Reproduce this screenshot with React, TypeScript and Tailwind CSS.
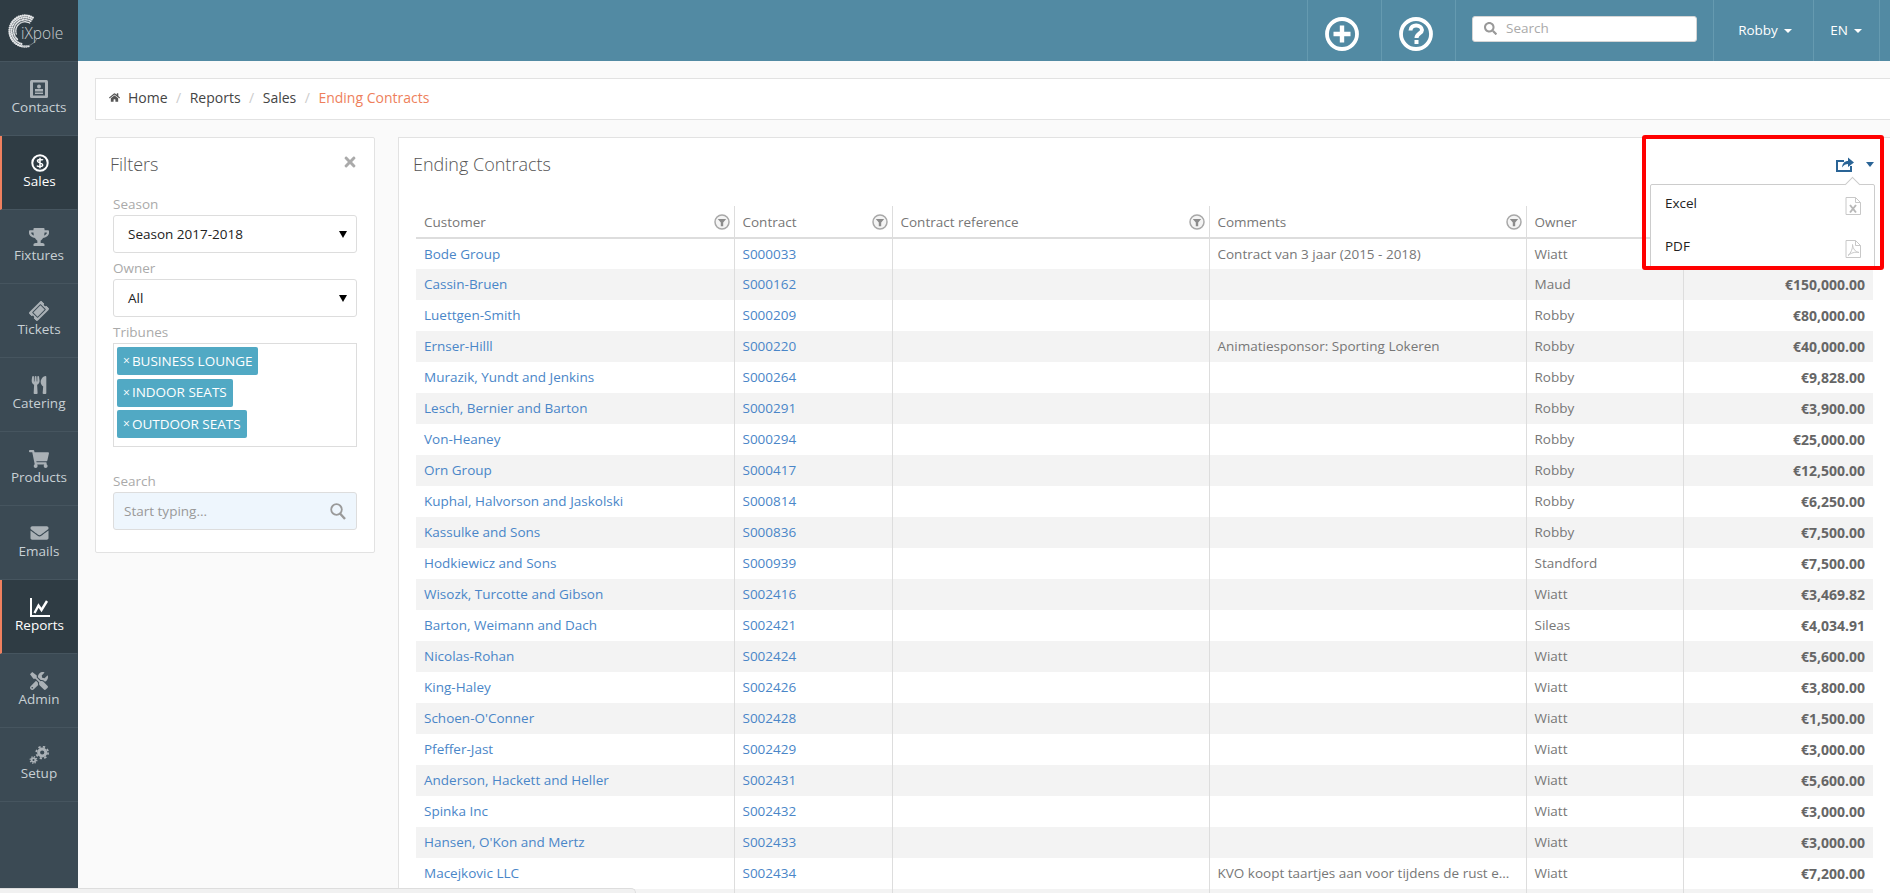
import type { ReactNode } from 'react';
import { FaTrophy, FaTicketAlt, FaUtensils, FaShoppingCart, FaEnvelope, FaTools, FaHome, FaTimes, FaSearch } from 'react-icons/fa';

interface Row {
  customer: string;
  contract: string;
  comments?: string;
  owner: string;
  amount: string;
}

const rows: Row[] = [
  { customer: 'Bode Group', contract: 'S000033', comments: 'Contract van 3 jaar (2015 - 2018)', owner: 'Wiatt', amount: '' },
  { customer: 'Cassin-Bruen', contract: 'S000162', owner: 'Maud', amount: '€150,000.00' },
  { customer: 'Luettgen-Smith', contract: 'S000209', owner: 'Robby', amount: '€80,000.00' },
  { customer: 'Ernser-Hilll', contract: 'S000220', comments: 'Animatiesponsor: Sporting Lokeren', owner: 'Robby', amount: '€40,000.00' },
  { customer: 'Murazik, Yundt and Jenkins', contract: 'S000264', owner: 'Robby', amount: '€9,828.00' },
  { customer: 'Lesch, Bernier and Barton', contract: 'S000291', owner: 'Robby', amount: '€3,900.00' },
  { customer: 'Von-Heaney', contract: 'S000294', owner: 'Robby', amount: '€25,000.00' },
  { customer: 'Orn Group', contract: 'S000417', owner: 'Robby', amount: '€12,500.00' },
  { customer: 'Kuphal, Halvorson and Jaskolski', contract: 'S000814', owner: 'Robby', amount: '€6,250.00' },
  { customer: 'Kassulke and Sons', contract: 'S000836', owner: 'Robby', amount: '€7,500.00' },
  { customer: 'Hodkiewicz and Sons', contract: 'S000939', owner: 'Standford', amount: '€7,500.00' },
  { customer: 'Wisozk, Turcotte and Gibson', contract: 'S002416', owner: 'Wiatt', amount: '€3,469.82' },
  { customer: 'Barton, Weimann and Dach', contract: 'S002421', owner: 'Sileas', amount: '€4,034.91' },
  { customer: 'Nicolas-Rohan', contract: 'S002424', owner: 'Wiatt', amount: '€5,600.00' },
  { customer: 'King-Haley', contract: 'S002426', owner: 'Wiatt', amount: '€3,800.00' },
  { customer: "Schoen-O'Conner", contract: 'S002428', owner: 'Wiatt', amount: '€1,500.00' },
  { customer: 'Pfeffer-Jast', contract: 'S002429', owner: 'Wiatt', amount: '€3,000.00' },
  { customer: 'Anderson, Hackett and Heller', contract: 'S002431', owner: 'Wiatt', amount: '€5,600.00' },
  { customer: 'Spinka Inc', contract: 'S002432', owner: 'Wiatt', amount: '€3,000.00' },
  { customer: "Hansen, O'Kon and Mertz", contract: 'S002433', owner: 'Wiatt', amount: '€3,000.00' },
  { customer: 'Macejkovic LLC', contract: 'S002434', comments: 'KVO koopt taartjes aan voor tijdens de rust e...', owner: 'Wiatt', amount: '€7,200.00' },
];

function ContactsIcon() {
  return (
    <svg viewBox="0 0 18 18" className="h-[18px] w-[18px]">
      <rect x="0" y="0" width="18" height="18" rx="1.5" fill="#aab1b6" />
      <rect x="3" y="2.5" width="12" height="13" fill="#3b4a54" />
      <circle cx="9" cy="6.5" r="2" fill="#aab1b6" />
      <rect x="5" y="9" width="8" height="2.5" fill="#aab1b6" />
      <rect x="5" y="12.5" width="8" height="1.5" fill="#aab1b6" />
    </svg>
  );
}

function SalesIcon() {
  return (
    <svg viewBox="0 0 18 18" className="h-[18px] w-[18px]">
      <circle cx="9" cy="9" r="7.7" fill="#2f3c44" stroke="#fff" strokeWidth="2" />
      <path d="M12 6.2 C11.4 5.2 6.6 4.8 6.4 6.9 C6.2 9 11.8 8.8 11.7 11 C11.5 13.2 6.6 12.8 6 11.7 M9 3.8 V14.2" fill="none" stroke="#fff" strokeWidth="1.5" />
    </svg>
  );
}

function ReportsIcon() {
  return (
    <svg viewBox="0 0 20 19" className="h-[19px] w-[20px]" fill="none" stroke="currentColor">
      <path d="M1 0 V18 H20" strokeWidth="2" />
      <path d="M4.5 15 L8.5 7.5 L11.5 12 L17 3" strokeWidth="2.4" />
    </svg>
  );
}

function SetupIcon() {
  return (
    <svg viewBox="0 0 20 18" className="h-[18px] w-[20px]" fill="none" stroke="currentColor">
      <circle cx="13.2" cy="6.5" r="3.6" strokeWidth="3" />
      <circle cx="13.2" cy="6.5" r="5.9" strokeWidth="1.8" strokeDasharray="2.3 2.33" />
      <circle cx="4.5" cy="14" r="1.9" strokeWidth="1.8" />
      <circle cx="4.5" cy="14" r="3.3" strokeWidth="1.3" strokeDasharray="1.3 1.29" />
    </svg>
  );
}

function Logo() {
  const dots: ReactNode[] = [];
  for (let ring = 0; ring < 4; ring++) {
    const r = 15.5 - ring * 2.1;
    const n = 30 - ring * 3;
    for (let i = 0; i < n; i++) {
      const a = (-60 - (i * (230 - ring * 28)) / n) * (Math.PI / 180);
      dots.push(<circle key={`${ring}-${i}`} cx={17 + r * Math.cos(a)} cy={17 + r * Math.sin(a)} r={1.2 - ring * 0.15} fill="#e4e6e8" />);
    }
  }
  return (
    <div className="relative h-[62px] border-b border-[#46555f] bg-[#2f3c44]">
      <svg viewBox="0 0 34 34" className="absolute left-[8px] top-[14px] h-[34px] w-[34px]">
        {dots}
        <path d="M29 25 A15.5 15.5 0 0 1 14 32" fill="none" stroke="#8f989e" strokeWidth="0.7" />
      </svg>
      <span className="absolute left-[21px] top-[22px] text-[15.5px] font-light leading-[22px] text-[#c9cdd0]">iXpole</span>
    </div>
  );
}

const navItems: { label: string; icon: ReactNode; active?: boolean }[] = [
  { label: 'Contacts', icon: <ContactsIcon /> },
  { label: 'Sales', icon: <SalesIcon />, active: true },
  { label: 'Fixtures', icon: <FaTrophy className="h-[18px] w-[20px]" /> },
  { label: 'Tickets', icon: <FaTicketAlt className="h-[18px] w-[18px] -rotate-45" /> },
  { label: 'Catering', icon: <FaUtensils className="h-[18px] w-[18px]" /> },
  { label: 'Products', icon: <FaShoppingCart className="h-[18px] w-[20px]" /> },
  { label: 'Emails', icon: <FaEnvelope className="h-[18px] w-[19px]" /> },
  { label: 'Reports', icon: <ReportsIcon />, active: true },
  { label: 'Admin', icon: <FaTools className="h-[18px] w-[20px]" /> },
  { label: 'Setup', icon: <SetupIcon /> },
];

function Sidebar() {
  return (
    <aside className="w-[78px] shrink-0 bg-[#3b4a54]">
      <Logo />
      {navItems.map((item) => (
        <div
          key={item.label}
          className={
            item.active
              ? 'flex h-[74px] flex-col items-center border-b border-l-2 border-r border-[#46555f] border-l-[#f0805f] border-r-[#35434c] bg-[#2f3c44] pt-[18px] text-white'
              : 'flex h-[74px] flex-col items-center border-b border-[#46555f] pt-[18px] text-[#c8d0d5]'
          }
        >
          <div className={item.active ? 'flex h-[18px] items-center text-white' : 'flex h-[18px] items-center text-[#aab1b6]'}>{item.icon}</div>
          <span className="text-[13.5px] leading-[18px]">{item.label}</span>
        </div>
      ))}
    </aside>
  );
}

function Caret({ className }: { className: string }) {
  return <span className={`inline-block h-0 w-0 border-x-[4px] border-t-[4px] border-x-transparent ${className}`} />;
}

function TopBar() {
  return (
    <header className="flex h-[61px] justify-end bg-[#528aa3]">
      <div className="flex w-[74px] justify-center border-l border-[#659ab0] pr-[5px] pt-[17px]">
        <svg viewBox="0 0 34 34" className="h-[34px] w-[34px]">
          <circle cx="17" cy="17" r="15" fill="none" stroke="#fff" strokeWidth="3.8" />
          <path d="M17 8.5 V25.5 M8.5 17 H25.5" stroke="#fff" strokeWidth="4.4" />
        </svg>
      </div>
      <div className="flex w-[74px] justify-center border-l border-[#659ab0] pr-[5px] pt-[17px]">
        <svg viewBox="0 0 34 34" className="h-[34px] w-[34px]">
          <circle cx="17" cy="17" r="15" fill="none" stroke="#fff" strokeWidth="3.8" />
          <path d="M11.5 13.5 C11.5 6.5 23 7.5 23 13 C23 16.5 17.5 16.5 17.5 21" fill="none" stroke="#fff" strokeWidth="4" />
          <rect x="15.5" y="23" width="4" height="4" fill="#fff" />
        </svg>
      </div>
      <div className="w-[258px] border-l border-[#659ab0] pl-[16px] pt-[16px]">
        <div className="flex h-[26px] w-[225px] items-center rounded-[3px] border border-[#d5d5d5] bg-white pb-[1px] pl-[11px] text-[13.5px] text-[#aaa]">
          <FaSearch className="mr-[9px] h-[13px] w-[13px] text-[#999]" />
          Search
        </div>
      </div>
      <div className="flex w-[100px] items-start justify-center border-l border-[#659ab0] pl-[3px] pt-[21px] text-[13.5px] leading-[18px] text-white">
        Robby
        <Caret className="ml-[6px] mt-[8px] border-t-white" />
      </div>
      <div className="flex w-[66px] items-start justify-center border-l border-[#659ab0] pr-[1px] pt-[21px] text-[13.5px] leading-[18px] text-white">
        EN
        <Caret className="ml-[6px] mt-[8px] border-t-white" />
      </div>
      <div className="w-[11px] border-l border-[#659ab0]" />
    </header>
  );
}

function Breadcrumb() {
  const sep = <span className="mx-[8.5px] text-[#ccc]">/</span>;
  return (
    <nav className="flex h-[42px] items-center border-y border-l border-[#e2e2e2] bg-white pb-[3px] pl-[13px] text-[14px] text-[#444]">
      <FaHome className="mr-[8px] h-[11px] w-[11px] text-[#555]" />
      <span>Home</span>
      {sep}
      <span>Reports</span>
      {sep}
      <span>Sales</span>
      {sep}
      <span className="text-[#ee7f5c]">Ending Contracts</span>
    </nav>
  );
}

function FieldLabel({ children, className }: { children: string; className: string }) {
  return <div className={`h-[18px] text-[13.5px] leading-[18px] text-[#aaa] ${className}`}>{children}</div>;
}

function SelectBox({ value }: { value: string }) {
  return (
    <div className="mt-[2px] flex h-[38px] items-center justify-between rounded-[3px] border border-[#ddd] bg-white pl-[14px] pr-[9px] text-[13.5px] text-[#222]">
      {value}
      <Caret className="border-x-[3.5px] border-t-[7px] border-t-black" />
    </div>
  );
}

function Tag({ label }: { label: string }) {
  return (
    <div className="flex h-[28px] items-center rounded-[2px] bg-[#51a9c4] pl-[6px] pr-[6px] text-[13.5px] text-white">
      <span className="mr-[2px] text-[12px]">×</span>
      {label}
    </div>
  );
}

function FiltersPanel() {
  return (
    <section className="h-[416px] w-[280px] shrink-0 rounded-[2px] border border-[#e2e2e2] bg-white pl-[17px] pr-[17px] pt-[14px]">
      <div className="-ml-[3px] flex h-[24px] items-center justify-between">
        <h2 className="text-[18px] font-light leading-[24px] text-[#555]">Filters</h2>
        <FaTimes className="mr-[-1px] -mt-[4px] h-[16px] w-[16px] text-[#aaa]" />
      </div>
      <FieldLabel className="mt-[19px]">Season</FieldLabel>
      <SelectBox value="Season 2017-2018" />
      <FieldLabel className="mt-[6px]">Owner</FieldLabel>
      <SelectBox value="All" />
      <FieldLabel className="mt-[6px]">Tribunes</FieldLabel>
      <div className="mt-[2px] flex h-[104px] flex-col items-start gap-[3.5px] border border-[#ddd] p-[3px]">
        <Tag label="BUSINESS LOUNGE" />
        <Tag label="INDOOR SEATS" />
        <Tag label="OUTDOOR SEATS" />
      </div>
      <FieldLabel className="mt-[25px]">Search</FieldLabel>
      <div className="mt-[2px] flex h-[38px] items-center justify-between rounded-[3px] border border-[#ddd] bg-[#eef6fd] pl-[10px] pr-[10px] text-[13.5px] text-[#999]">
        Start typing...
        <svg viewBox="0 0 16 17" className="h-[17px] w-[16px]">
          <circle cx="6.5" cy="6.5" r="5.3" fill="none" stroke="#9a9a9a" strokeWidth="1.8" />
          <path d="M10 10.5 L15 16" stroke="#9a9a9a" strokeWidth="2.4" />
        </svg>
      </div>
    </section>
  );
}

function FilterIcon() {
  return (
    <svg viewBox="0 0 16 16" className="h-[16px] w-[16px] shrink-0">
      <circle cx="8" cy="8" r="7" fill="#f4f4f4" stroke="#a8a8a8" strokeWidth="1.5" />
      <path d="M3.8 5 H12.2 L9.2 8.5 V12.2 H6.8 V8.5 Z" fill="#8c8c8c" />
    </svg>
  );
}

function HeaderCell({ label, filter, first }: { label: string; filter?: boolean; first?: boolean }) {
  return (
    <th className={first ? 'h-[32px] border-b-2 border-[#ddd] p-0 pt-[1px] font-normal' : 'h-[32px] border-b-2 border-l border-[#ddd] p-0 pt-[1px] font-normal'}>
      <div className="flex items-center justify-between pl-[8px] pr-[4px] text-[#777]">
        {label}
        {filter && <FilterIcon />}
      </div>
    </th>
  );
}

function ContractsTable() {
  const cell = 'h-[31px] border-l border-[#ddd] p-0 px-[8px]';
  return (
    <table className="w-[1457px] table-fixed border-collapse text-left text-[13.5px]">
      <colgroup>
        <col className="w-[318px]" />
        <col className="w-[158px]" />
        <col className="w-[317px]" />
        <col className="w-[317px]" />
        <col className="w-[157px]" />
        <col className="w-[190px]" />
      </colgroup>
      <thead>
        <tr>
          <HeaderCell label="Customer" filter first />
          <HeaderCell label="Contract" filter />
          <HeaderCell label="Contract reference" filter />
          <HeaderCell label="Comments" filter />
          <HeaderCell label="Owner" filter />
          <HeaderCell label="" />
        </tr>
      </thead>
      <tbody>
        {rows.map((row, i) => (
          <tr key={row.contract} className={i % 2 === 1 ? 'bg-[#f3f3f3]' : 'bg-white'}>
            <td className="h-[31px] p-0 px-[8px] text-[#4a86c8]">{row.customer}</td>
            <td className={`${cell} text-[#4a86c8]`}>{row.contract}</td>
            <td className={cell} />
            <td className={`${cell} truncate text-[#777]`}>{row.comments}</td>
            <td className={`${cell} text-[#777]`}>{row.owner}</td>
            <td className={`${cell} text-right text-[14px] font-bold text-[#666]`}>{row.amount}</td>
          </tr>
        ))}
        <tr className="bg-[#f3f3f3]">
          <td className="h-[31px] p-0" />
          <td className={cell} />
          <td className={cell} />
          <td className={cell} />
          <td className={cell} />
          <td className={cell} />
        </tr>
      </tbody>
    </table>
  );
}

function ExcelIcon() {
  return (
    <svg viewBox="0 0 16 18" className="h-[18px] w-[16px]" fill="none" stroke="#c8c8c8">
      <path d="M1 .5 H10.5 L15.5 5.5 V17.5 H1 Z M10.5 .5 V5.5 H15.5" />
      <path d="M5 8 L11 15.5 M11 8 L5 15.5" stroke="#b8b8b8" strokeWidth="2" />
    </svg>
  );
}

function PdfIcon() {
  return (
    <svg viewBox="0 0 16 18" className="h-[18px] w-[16px]" fill="none" stroke="#c8c8c8">
      <path d="M1 .5 H10.5 L15.5 5.5 V17.5 H1 Z M10.5 .5 V5.5 H15.5" />
      <path d="M3 15.5 C6 13 8 8 7.5 4.5 C8 9 10.5 12 14 12.5 C10 11.5 6 13 3 15.5 Z" />
    </svg>
  );
}

function ExportMenu() {
  return (
    <div className="absolute right-[6px] top-[-3px] h-[135px] w-[242px] overflow-hidden rounded-[3px] border-4 border-[#ff0000]">
      <div className="absolute left-[4px] top-[45px] h-[200px] w-[225px] rounded-[2px] border border-[#ccc] bg-white text-[13.5px] text-[#222]">
        <div className="absolute left-[196px] top-[-6px] h-[11px] w-[11px] rotate-45 border-l border-t border-[#ccc] bg-white" />
        <div className="flex h-[43px] items-center justify-between pb-[6px] pl-[14px] pr-[13px]">
          Excel
          <span className="mt-[4px]"><ExcelIcon /></span>
        </div>
        <div className="flex h-[43px] items-center justify-between pb-[6px] pl-[14px] pr-[13px]">
          PDF
          <span className="mt-[4px]"><PdfIcon /></span>
        </div>
      </div>
    </div>
  );
}

function ContractsPanel() {
  return (
    <section className="relative min-w-0 flex-1 border-l border-t border-[#e2e2e2] bg-white pl-[17px] pr-[17px] pt-[14px]">
      <div className="flex h-[24px] items-center justify-between">
        <h2 className="-ml-[3px] text-[18px] font-light leading-[24px] text-[#555]">Ending Contracts</h2>
        <div className="-mr-[1px] flex items-center gap-[12px] text-[#2a6496]">
          <svg viewBox="0 0 18 16" className="h-[16px] w-[18px]" fill="none" stroke="currentColor">
            <path d="M8 5 H1 V15 H15 V10" strokeWidth="2" />
            <path d="M6 11.5 C6.5 7 9 5 12 5 V1.5 L18 6.5 L12 11 V8 C10 8 7.5 9 6 11.5 Z" fill="currentColor" stroke="none" />
          </svg>
          <Caret className="border-x-[4.5px] border-t-[5px] border-t-[#2a6496]" />
        </div>
      </div>
      <div className="mt-[30px]">
        <ContractsTable />
      </div>
      <ExportMenu />
    </section>
  );
}

export default function App() {
  return (
    <div className="relative flex h-[893px] overflow-hidden bg-[#fafafa] font-['Open_Sans',sans-serif]">
      <Sidebar />
      <main className="min-w-0 flex-1">
        <TopBar />
        <div className="pl-[17px] pt-[17px]">
          <Breadcrumb />
          <div className="mt-[17px] flex gap-[23px]">
            <FiltersPanel />
            <ContractsPanel />
          </div>
        </div>
      </main>
      <div className="absolute left-0 top-[888px] h-[5px] w-[636px] rounded-tr-md border-r border-t border-[#ddd] bg-[#f1f1f1]" />
    </div>
  );
}
